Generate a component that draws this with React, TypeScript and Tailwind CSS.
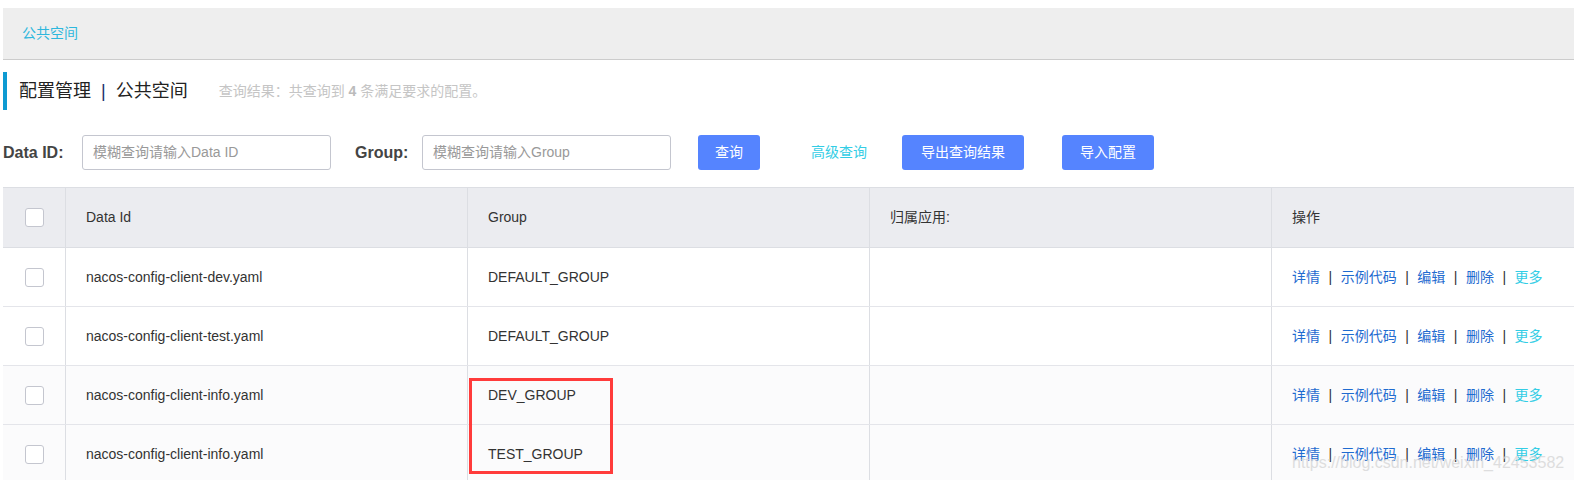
import React from "react";

const FONT = { fontFamily: '"Liberation Sans", "Noto Sans CJK SC", Arial, sans-serif' };

type Row = { dataId: string; group: string };

const rows: Row[] = [
  { dataId: "nacos-config-client-dev.yaml", group: "DEFAULT_GROUP" },
  { dataId: "nacos-config-client-test.yaml", group: "DEFAULT_GROUP" },
  { dataId: "nacos-config-client-info.yaml", group: "DEV_GROUP" },
  { dataId: "nacos-config-client-info.yaml", group: "TEST_GROUP" },
];

const Checkbox = () => (
  <span className="block w-[19px] h-[19px] rounded-[3px] border border-[#c4c6cf] bg-white" />
);

const Sep = () => <span className="mx-[8.5px] text-[#333]">|</span>;

const Actions = () => (
  <div className="flex items-center text-[14px] text-[#1f6bd0]">
    <span>详情</span>
    <Sep />
    <span>示例代码</span>
    <Sep />
    <span>编辑</span>
    <Sep />
    <span>删除</span>
    <Sep />
    <span className="text-[#33cde5]">更多</span>
  </div>
);

const App = () => {
  return (
    <div className="relative h-[480px] w-full overflow-hidden bg-white pl-[3px] pt-[8px] text-[#333]" style={FONT}>
      {/* breadcrumb bar */}
      <div className="flex h-[52px] items-center border-b border-[#cccccc] bg-[#eeeeee] pl-[19px] text-[14px] text-[#2db7dd]">
        公共空间
      </div>

      {/* title */}
      <div className="mt-[12px] flex h-[38px] items-center">
        <div className="h-full w-[4px] bg-[#0e9ad2]" />
        <div className="ml-[12px] flex items-center text-[18px] text-[#222]">
          <span>配置管理</span>
          <span className="mx-[10px] text-[#1a2a6c]">|</span>
          <span>公共空间</span>
        </div>
        <div className="ml-[31px] text-[14px] text-[#c5c5c5]">
          查询结果：共查询到 <b className="text-[#bbbbbb]">4</b> 条满足要求的配置。
        </div>
      </div>

      {/* search row */}
      <div className="mt-[25px] flex h-[35px] items-center text-[14px]">
        <span className="w-[79px] text-[16px] font-bold text-[#444]">Data ID:</span>
        <div className="flex h-full w-[249px] items-center rounded-[3px] border border-[#c4c6cf] pl-[10px] text-[#999]">
          模糊查询请输入Data ID
        </div>
        <span className="ml-[24px] w-[67px] text-[16px] font-bold text-[#444]">Group:</span>
        <div className="flex h-full w-[249px] items-center rounded-[3px] border border-[#c4c6cf] pl-[10px] text-[#999]">
          模糊查询请输入Group
        </div>
        <button className="ml-[27px] h-full w-[62px] rounded-[3px] bg-[#5584ff] text-white">查询</button>
        <span className="ml-[51px] text-[#33cde5]">高级查询</span>
        <button className="ml-[35px] h-full w-[122px] rounded-[3px] bg-[#5584ff] text-white">导出查询结果</button>
        <button className="ml-[38px] h-full w-[92px] rounded-[3px] bg-[#5584ff] text-white">导入配置</button>
      </div>

      {/* table */}
      <div className="mt-[17px] border-t border-[#dcdee3] text-[14px]">
        <div className="flex h-[60px] border-b border-[#dcdee3] bg-[#ebecf0]">
          <div className="flex w-[63px] items-center justify-center border-r border-[#dcdee3]">
            <Checkbox />
          </div>
          <div className="flex w-[402px] items-center border-r border-[#dcdee3] pl-[20px]">Data Id</div>
          <div className="flex w-[402px] items-center border-r border-[#dcdee3] pl-[20px]">Group</div>
          <div className="flex w-[402px] items-center border-r border-[#dcdee3] pl-[20px]">归属应用:</div>
          <div className="flex flex-1 items-center pl-[20px]">操作</div>
        </div>
        {rows.map((r, i) => (
          <div
            key={i}
            className={`flex h-[59px] border-b border-[#e4e5ea] ${i >= 2 ? "bg-[#fbfbfc]" : "bg-white"}`}
          >
            <div className="flex w-[63px] items-center justify-center border-r border-[#dcdee3]">
              <Checkbox />
            </div>
            <div className="flex w-[402px] items-center border-r border-[#dcdee3] pl-[20px]">{r.dataId}</div>
            <div className="flex w-[402px] items-center border-r border-[#dcdee3] pl-[20px]">{r.group}</div>
            <div className="w-[402px] border-r border-[#dcdee3]" />
            <div className="flex flex-1 items-center pl-[20px]">
              <Actions />
            </div>
          </div>
        ))}
      </div>

      {/* annotation box */}
      <div className="absolute left-[469px] top-[378px] h-[96px] w-[144px] border-[3px] border-[#ff3b3b]" />

      {/* watermark */}
      <div className="absolute left-[1292px] top-[451px] text-[16px] text-[#d4d4d4] opacity-75">
        https://blog.csdn.net/weixin_42453582
      </div>
    </div>
  );
};

export default App;
